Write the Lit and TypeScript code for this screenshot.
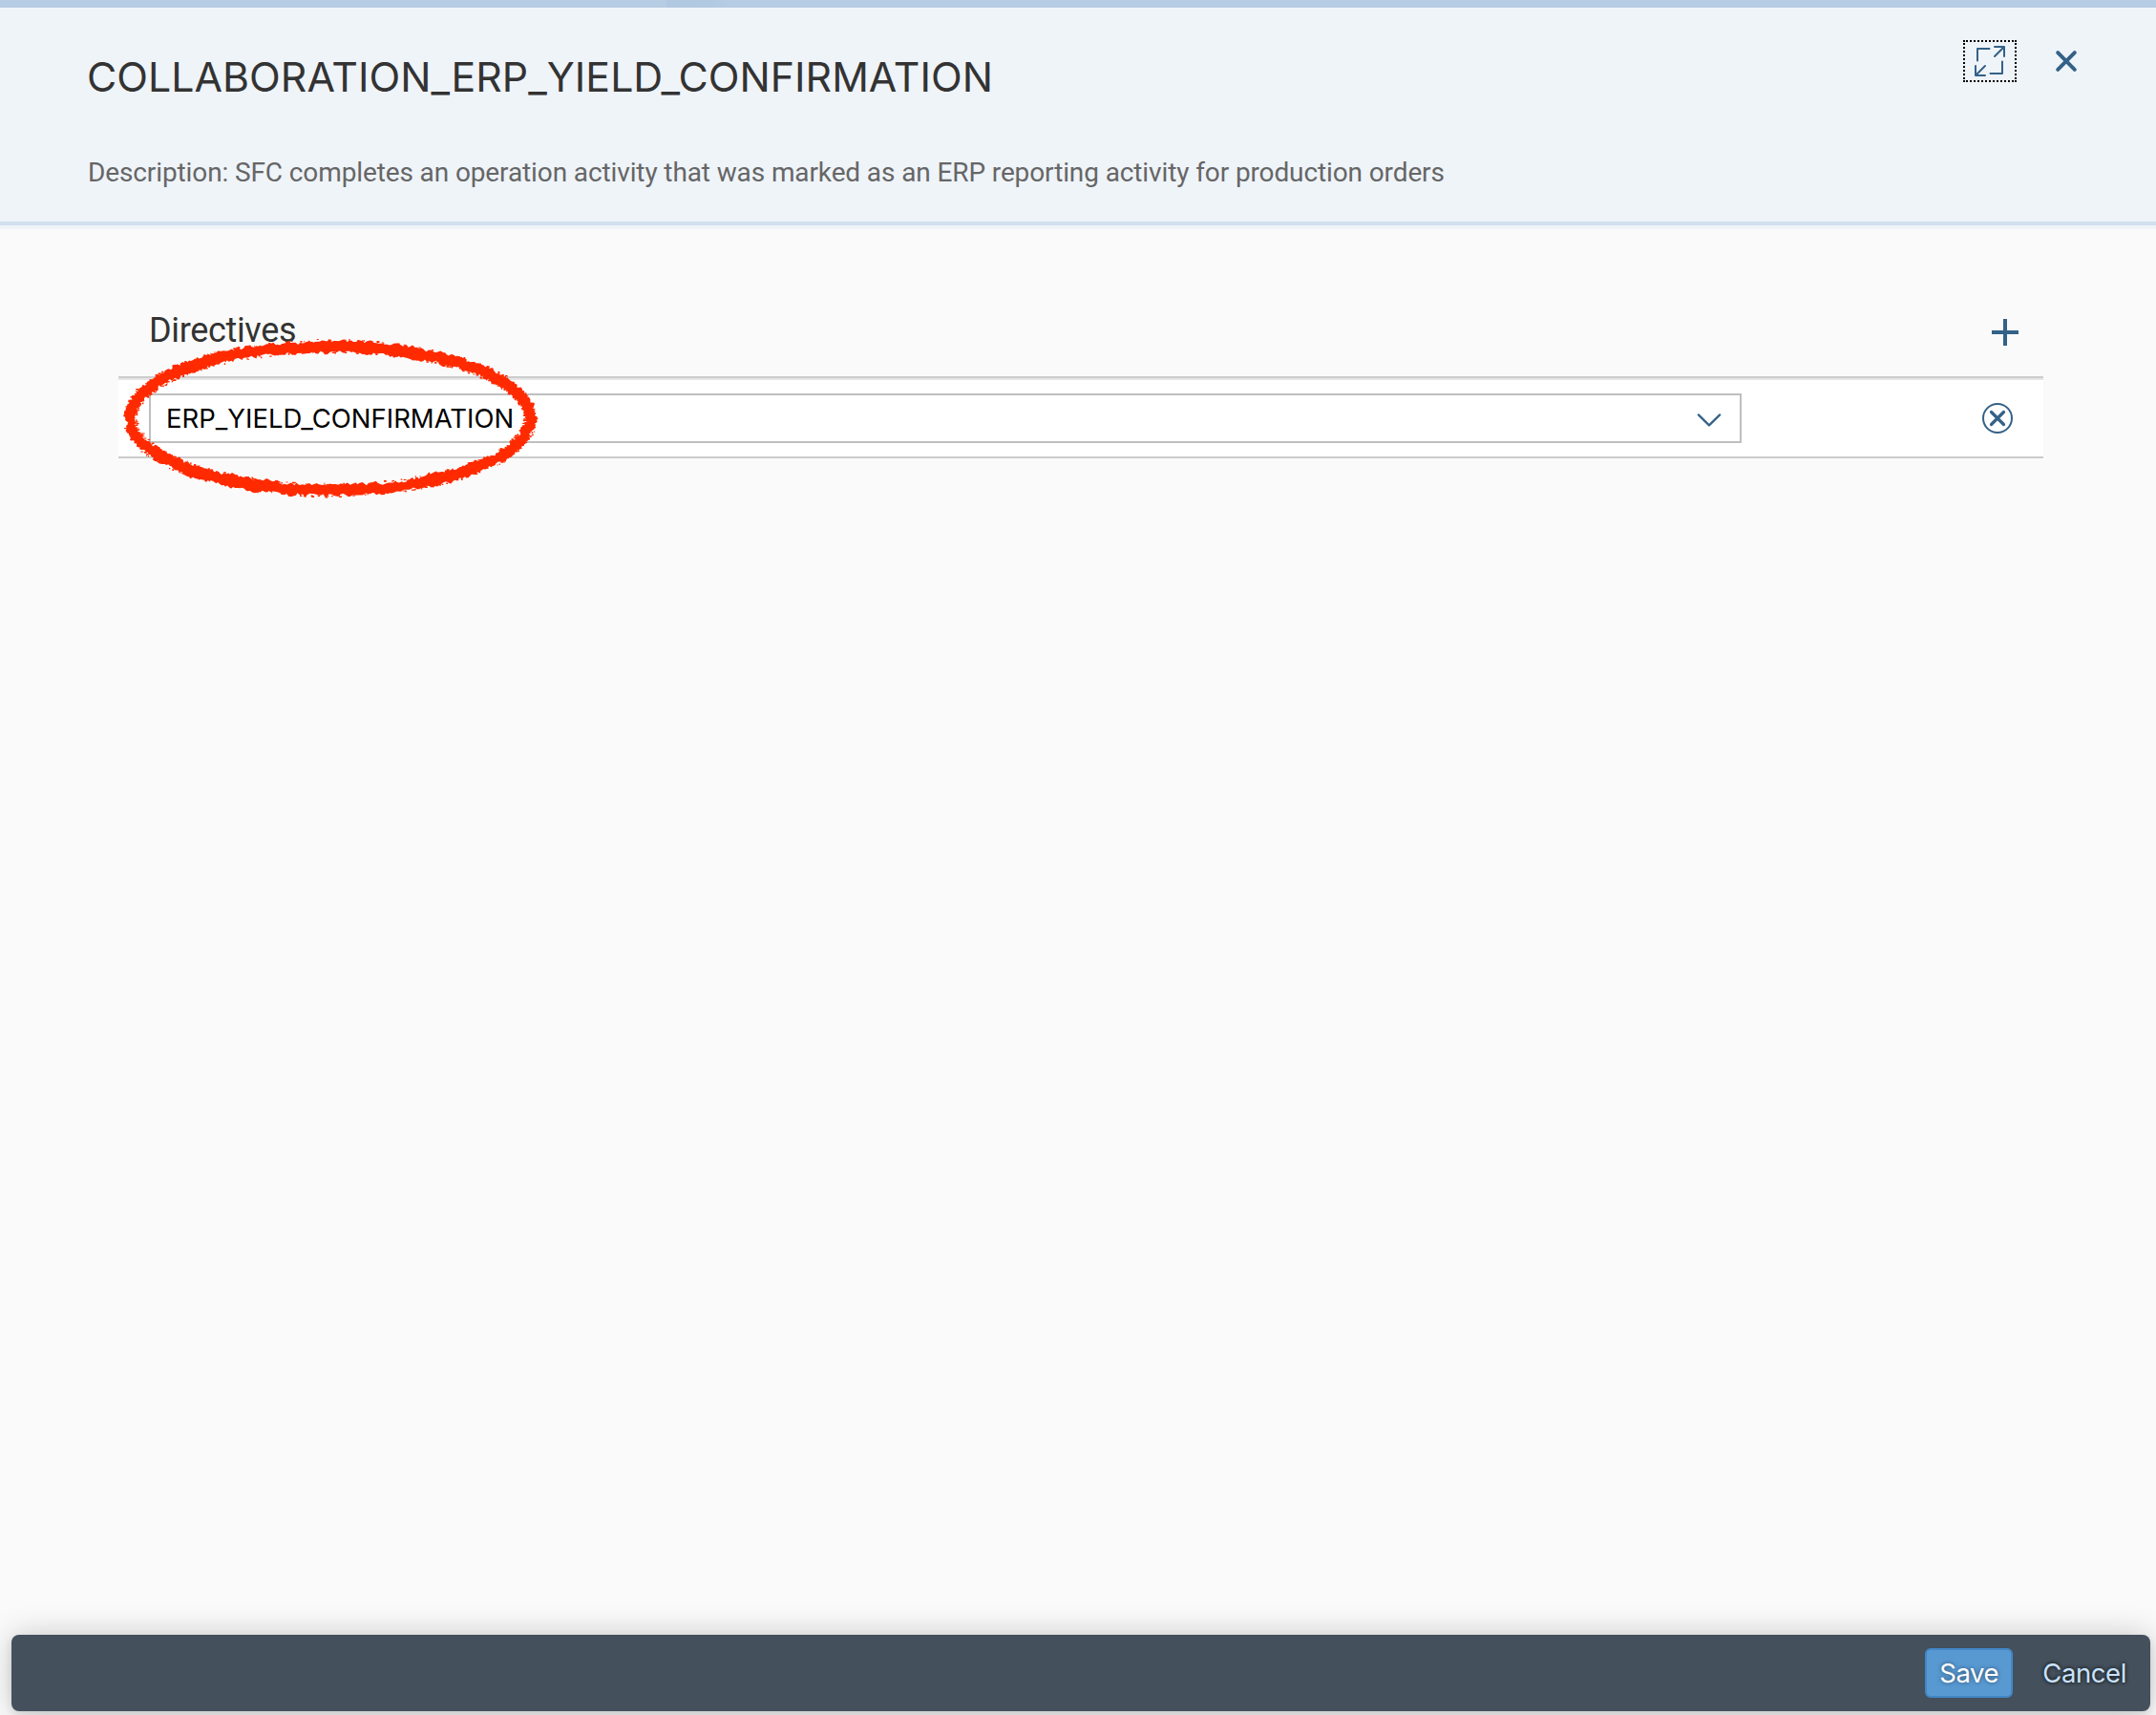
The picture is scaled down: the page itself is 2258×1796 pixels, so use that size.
import { LitElement, html, svg, css } from "lit";
import { customElement } from "lit/decorators.js";

// Deterministic pseudo-random source, so the brush looks the same on every paint.
function createRandom(seed: number) {
  let s = seed;
  return () => {
    s = (s * 1664525 + 1013904223) >>> 0;
    return s / 4294967296;
  };
}

const WIDTH = 440;
const HEIGHT = 176;

// A crayon-like ring: a solid core band with ragged edges and loose flecks.
function brushRing() {
  const rnd = createRandom(7);
  const cx = WIDTH / 2;
  const cy = HEIGHT / 2;
  const rx = 209.5;
  const ry = 75.4;
  const steps = 560;
  const at = (i: number, off: number) => {
    const a = (i / steps) * Math.PI * 2;
    const nx = Math.cos(a) / rx;
    const ny = Math.sin(a) / ry;
    const n = Math.hypot(nx, ny);
    return [cx + rx * Math.cos(a) + (nx / n) * off, cy + ry * Math.sin(a) + (ny / n) * off];
  };
  const edge = (dir: number) => {
    let out = "";
    let drift = 0;
    for (let i = 0; i < steps; i++) {
      drift = drift * 0.75 + (rnd() - 0.5) * 1.8;
      const reach = 5.7 + drift + (rnd() - 0.5) * 2.6;
      const [x, y] = at(i + rnd() * 0.8, dir * reach);
      out += `${i ? "L" : "M"}${x.toFixed(1)} ${y.toFixed(1)}`;
    }
    return out + "Z";
  };
  let flecks = "";
  for (let k = 0; k < 380; k++) {
    const side = rnd() > 0.5 ? 1 : -1;
    const [x, y] = at(rnd() * steps, side * (5 + rnd() * 2.2));
    const l = 1 + rnd() * 2;
    flecks += `M${(x - l / 2).toFixed(1)} ${(y - 0.7).toFixed(1)}h${l.toFixed(1)}v${(0.9 + rnd()).toFixed(1)}h${(-l).toFixed(1)}z`;
  }
  return svg`<path fill-rule="evenodd" d=${edge(1) + edge(-1)}></path><path d=${flecks}></path>`;
}

const fullScreenIcon = html`<svg class="icon" width="32" height="32" viewBox="0 0 32 32" stroke-width="2" stroke-linecap="round" stroke-linejoin="round">
  <path d="M15.5 3H3v12.5M29 16.5V29H16.5M21 1h10v10M21 11 30.5 1.5M1 21v10h10M11 21 1.500 30.500" />
</svg>`;

const closeIcon = html`<svg class="icon" width="24" height="24" viewBox="0 0 24 24" stroke-width="4" stroke-linecap="round">
  <path d="M3.200 3.200 20.800 20.800M20.800 3.200 3.200 20.800" />
</svg>`;

const addIcon = html`<svg class="icon" width="28" height="28" viewBox="0 0 28 28" stroke-width="4"><path d="M14 0v28M0 14h28" /></svg>`;

const arrowIcon = html`<svg class="icon" width="28" height="16" viewBox="0 0 28 16" stroke-width="2.2" stroke-linecap="round" stroke-linejoin="round">
  <path d="M2.800 2.400 14 13.400 25.200 2.400" />
</svg>`;

const declineIcon = html`<svg class="icon" width="32" height="32" viewBox="0 0 32 32">
  <circle cx="16" cy="16" r="15" stroke-width="2" />
  <path d="M9.500 9.500 22.500 22.500M22.500 9.500 9.500 22.500" stroke-width="3.200" stroke-linecap="round" />
</svg>`;

@customElement("app-root")
export class AppRoot extends LitElement {
  static styles = css`
    :host {
      display: flex;
      flex-direction: column;
      box-sizing: border-box;
      height: 1796px;
      background: #fafafa;
      font-family: Roboto, "Liberation Sans", sans-serif;
      overflow: hidden;
    }
    * { box-sizing: border-box; }
    .icon { display: block; fill: none; stroke: #346187; }
    button {
      font: inherit;
      letter-spacing: inherit;
      margin: 0;
      padding: 0;
      border: 0;
      background: none;
      display: flex;
      align-items: center;
      justify-content: center;
    }
    .strip {
      height: 8px;
      flex: none;
      background: linear-gradient(90deg, transparent 698px, #b0c8e0 698px, #b2c9e2 745px, transparent 766px), #b7cde4;
    }
    .header {
      height: 232px;
      flex: none;
      display: flex;
      justify-content: space-between;
      background: #eff4f9;
      padding: 34px 72px 0 91px;
      box-shadow: inset 0 -4px #eff4f9, inset 0 -8px #d1e0ee;
    }
    .headings { padding-top: 13px; }
    .title {
      margin: 0;
      font-family: Inter, sans-serif;
      font-size: 42.8px;
      line-height: 52px;
      font-weight: 400;
      letter-spacing: 0.03px;
      color: #333;
      white-space: nowrap;
    }
    .description {
      margin: 58px 0 0 1px;
      font-size: 28px;
      line-height: 32px;
      letter-spacing: -0.115px;
      color: #666;
      white-space: nowrap;
    }
    .actions { display: flex; gap: 30px; }
    .actions button { width: 44px; height: 44px; }
    .actions .fullscreen { width: 56px; border: 2px dotted #000; }
    .content { flex: 1; padding: 78px 118px 0 124px; }
    .toolbar {
      height: 76px;
      padding: 8px 26px 28px 32px;
      display: flex;
      justify-content: space-between;
      align-items: flex-start;
    }
    .toolbar button { margin-top: 8px; }
    .toolbar h2 {
      margin: 0;
      font-size: 36px;
      line-height: 40px;
      font-weight: 400;
      letter-spacing: -0.334px;
      color: #333;
    }
    .table { position: relative; }
    .row {
      height: 86px;
      background: #fff;
      border-top: 2px solid #ccc;
      border-bottom: 2px solid #ccc;
      box-shadow: inset 0 2px #e6e6e6;
      display: flex;
      align-items: flex-start;
      justify-content: space-between;
      padding: 16px 32px 0;
    }
    .select {
      width: 1668px;
      height: 52px;
      border: 2px solid #bfbfbf;
      background: #fff;
      padding: 0 18px 0 16px;
      display: flex;
      align-items: center;
      justify-content: space-between;
      font-family: Inter, sans-serif;
      font-size: 27.5px;
      line-height: 48px;
      color: #000;
    }
    .select .icon { margin-top: 3px; }
    .remove { height: 52px; }
    .brush {
      position: absolute;
      left: 2px;
      top: -44px;
      fill: #ff2a00;
      pointer-events: none;
    }
    .footer {
      flex: none;
      height: 80px;
      margin: 0 6px 4px 12px;
      padding: 0 25px 0 0;
      border-radius: 8px;
      background: #44505c;
      box-shadow: 0 0 32px rgba(0, 0, 0, 0.2), 0 4px 8px rgba(0, 0, 0, 0.1);
      display: flex;
      align-items: center;
      justify-content: flex-end;
      gap: 31px;
      font-family: Inter, sans-serif;
      font-size: 27.5px;
      line-height: 48px;
      letter-spacing: -0.4px;
    }
    .footer button { height: 52px; }
    .footer .save {
      width: 92px;
      border-radius: 6px;
      border: 2px solid #4187c6;
      background: #5899d2;
      color: #fff;
      text-shadow: 0 0 4px rgba(0, 0, 0, 0.5);
    }
    .cancel { color: #c9e2fb; text-shadow: 0 0 4px #000; }
  `;

  render() {
    return html`
      <div class="strip"></div>
      <header class="header">
        <div class="headings">
          <h1 class="title">COLLABORATION_ERP_YIELD_CONFIRMATION</h1>
          <p class="description">Description: SFC completes an operation activity that was marked as an ERP reporting activity for production orders</p>
        </div>
        <div class="actions">
          <button class="fullscreen">${fullScreenIcon}</button>
          <button>${closeIcon}</button>
        </div>
      </header>
      <main class="content">
        <div class="toolbar">
          <h2>Directives</h2>
          <button>${addIcon}</button>
        </div>
        <div class="table">
          <div class="row">
            <div class="select"><span>ERP_YIELD_CONFIRMATION</span>${arrowIcon}</div>
            <button class="remove">${declineIcon}</button>
          </div>
          <svg class="brush" width=${WIDTH} height=${HEIGHT} viewBox="0 0 ${WIDTH} ${HEIGHT}">${brushRing()}</svg>
        </div>
      </main>
      <footer class="footer">
        <button class="save">Save</button>
        <button class="cancel">Cancel</button>
      </footer>
    `;
  }
}
